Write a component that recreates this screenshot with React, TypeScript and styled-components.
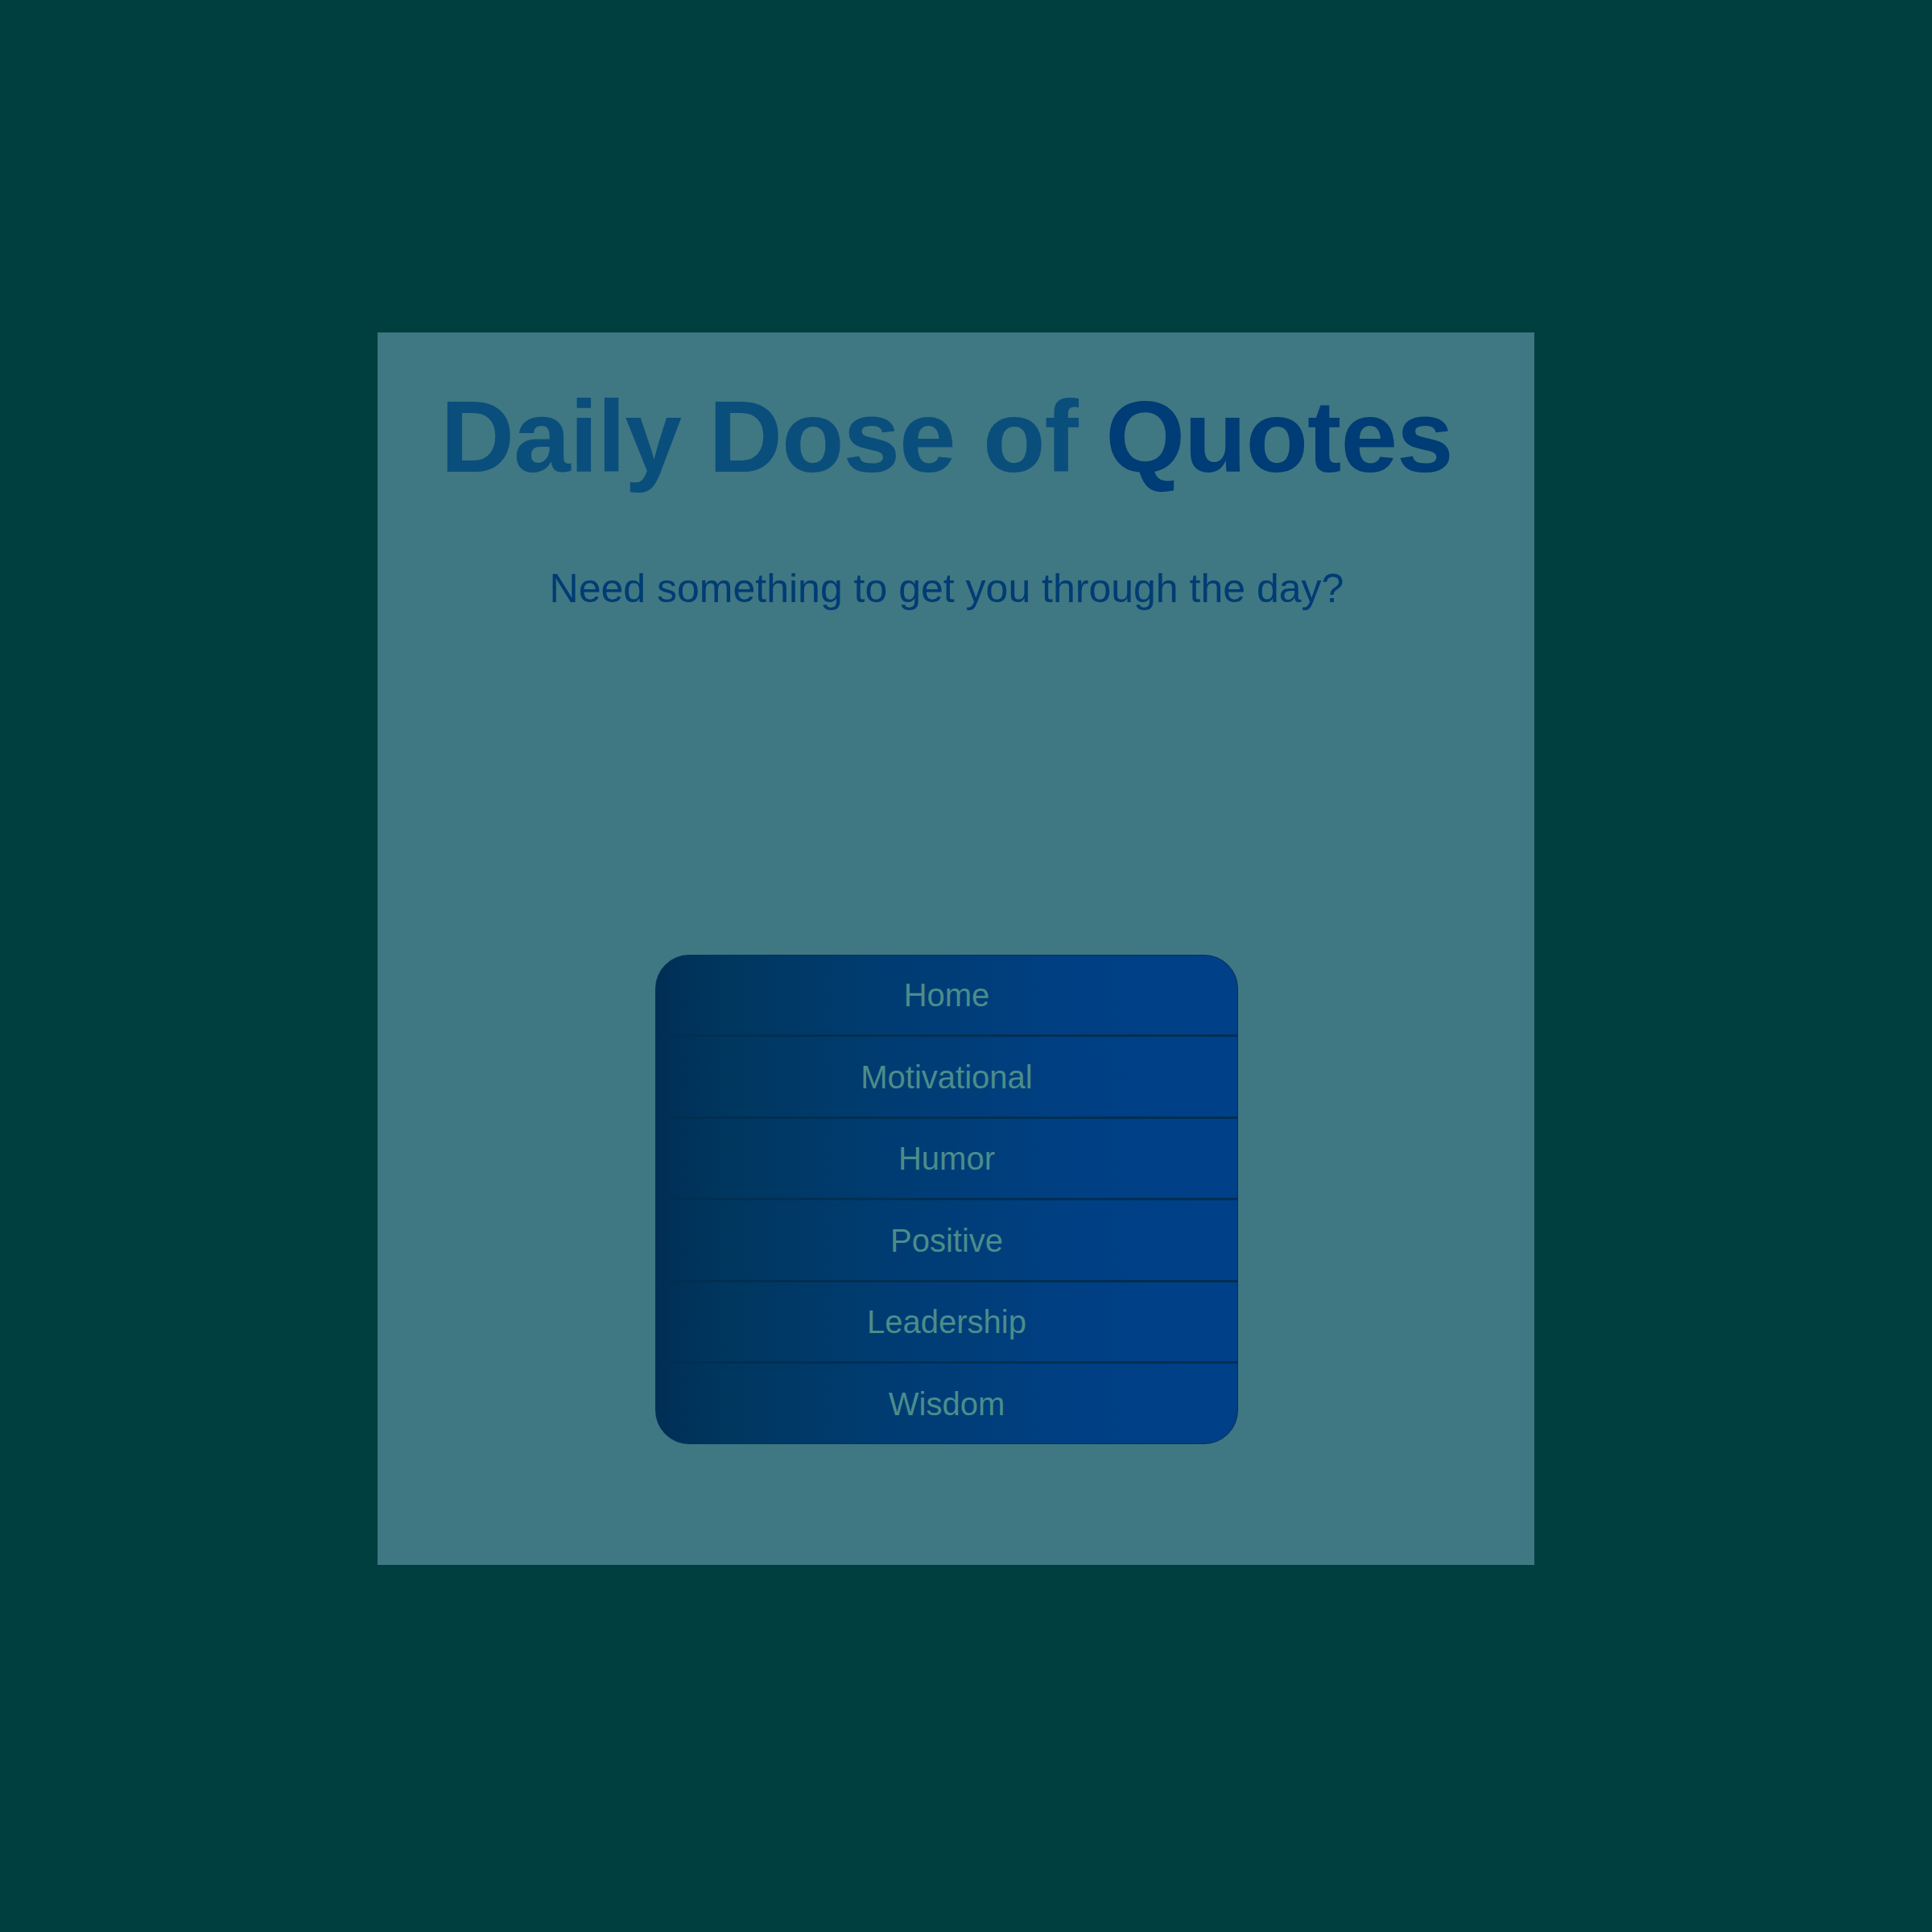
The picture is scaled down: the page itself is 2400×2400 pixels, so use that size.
import React from 'react';
import styled, { createGlobalStyle } from 'styled-components';

const GlobalStyle = createGlobalStyle`
    html, body {
        margin: 0;
        padding: 0;
        background-color: #003F3F;
        font-family: "Liberation Sans", Arial, sans-serif;
    }
`;

const Page = styled.div`
    min-height: 2400px;
    padding: 413px 0 0 469px;
    box-sizing: border-box;
`;

const Panel = styled.main`
    width: 1437px;
    height: 1531px;
    background-color: #3F7783;
    padding: 56px 23px 0 0;
    box-sizing: border-box;
    display: flex;
    flex-direction: column;
    align-items: center;
`;

const Title = styled.h1`
    margin: 0;
    font-size: 127px;
    font-weight: 700;
    letter-spacing: -1px;
    line-height: 1.15;
    color: #0A4E7C;
    > span {
        color: #003C75;
    }
`;

const Subtitle = styled.p`
    margin: 88px 0 0;
    font-size: 50px;
    line-height: 1.15;
    color: #003C74;
`;

const Nav = styled.nav`
    margin-top: 425px;
    width: 724px;
    border-radius: 42px;
    overflow: hidden;
    border: 1px solid #003258;
    box-sizing: border-box;
    background: linear-gradient(to right, #002E55 0%, #00375F 12%, #003C72 40%, #003F82 70%, #004089 100%);
    display: flex;
    flex-direction: column;
`;

const NavItem = styled.a<{ $last?: boolean }>`
    display: flex;
    align-items: center;
    justify-content: center;
    height: ${p => (p.$last ? '99px' : '101.5px')};
    box-sizing: border-box;
    border-bottom: ${p => (p.$last ? 'none' : '3px solid #002F52')};
    font-size: 40px;
    color: #4B8D8A;
    text-decoration: none;
    padding-top: 2px;
`;

const links = ['Home', 'Motivational', 'Humor', 'Positive', 'Leadership', 'Wisdom'];

export default function App() {
    return (
        <>
            <GlobalStyle />
            <Page>
                <Panel>
                    <Title>
                        Daily Dose of <span>Quotes</span>
                    </Title>
                    <Subtitle>Need something to get you through the day?</Subtitle>
                    <Nav>
                        {links.map((l, i) => (
                            <NavItem key={l} href="#" $last={i === links.length - 1}>
                                {l}
                            </NavItem>
                        ))}
                    </Nav>
                </Panel>
            </Page>
        </>
    );
}
